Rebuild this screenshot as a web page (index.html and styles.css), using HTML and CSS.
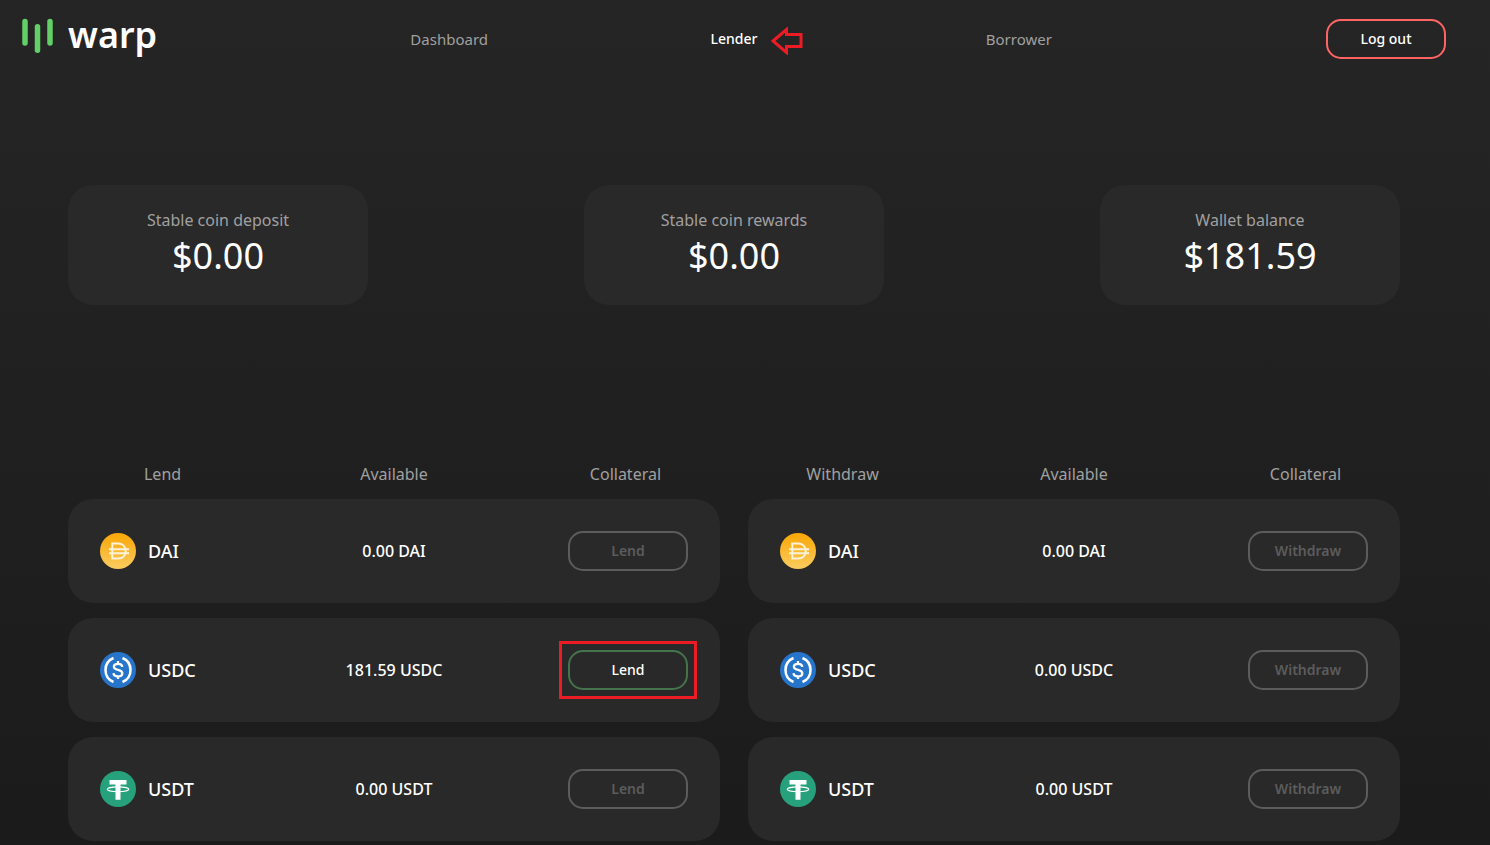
FILE: index.html
```
<!DOCTYPE html>
<html lang="en">
<head>
    <meta charset="UTF-8">
    <meta name="viewport" content="width=device-width, initial-scale=1.0">
    <title>Warp | Lender</title>
    <link rel="stylesheet" href="styles.css">
</head>
<body>
    <!-- Coin icons, reused in both tables -->
    <svg class="sprite" aria-hidden="true">
        <defs>
            <linearGradient id="dai-fill" x1="0" y1="0" x2="0" y2="1">
                <stop offset="0" stop-color="#f9a606"/>
                <stop offset="1" stop-color="#fbcc5f"/>
            </linearGradient>
        </defs>
        <symbol id="dai" viewBox="0 0 36 36">
            <circle cx="18" cy="18" r="18" fill="url(#dai-fill)"/>
            <path d="M12.300 10.600H18c4.800 0 7.700 3 7.700 7.500s-2.900 7.500-7.700 7.500h-5.700zM9 16.200h20M9 20.200h20" fill="none" stroke="#fef3d7" stroke-width="2"/>
        </symbol>
        <symbol id="usdc" viewBox="0 0 36 36">
            <circle cx="18" cy="18" r="18" fill="#2775ca"/>
            <path d="M13.500 6a13 13 0 0 0 0 24M22.500 6a13 13 0 0 1 0 24" fill="none" stroke="#fff" stroke-width="2.500"/>
            <path d="M22.300 14.800c-.2-2-1.900-3-4.300-3-2.500 0-4.100 1.200-4.100 3 0 4.400 8.400 1.900 8.400 6.400 0 2-1.800 3.200-4.300 3.200-2.600 0-4.300-1.200-4.500-3.300M18 9v3M18 24v3" fill="none" stroke="#fff" stroke-width="2.300"/>
        </symbol>
        <symbol id="usdt" viewBox="0 0 36 36">
            <circle cx="18" cy="18" r="18" fill="#26a17b"/>
            <path d="M9.500 9h17v4.500h-6v15.200h-5V13.500h-6z" fill="#fff"/>
            <ellipse cx="18" cy="18.300" rx="10.800" ry="2.400" fill="none" stroke="#fff" stroke-width="1.100"/>
        </symbol>
    </svg>

    <header class="header">
        <a class="logo" href="#">
            <svg class="logo-bars" viewBox="0 0 32 36" aria-hidden="true">
                <g stroke="#62d066" stroke-width="5.500" stroke-linecap="round">
                    <path d="M3 4.500V26M15.500 9.700V33.200M28 4.500V26"/>
                </g>
            </svg>
            <span>warp</span>
        </a>
        <nav class="nav">
            <a href="#">Dashboard</a>
            <a class="active" href="#" aria-current="page">Lender
                <svg class="arrow" viewBox="0 0 32 28" aria-hidden="true">
                    <path d="M2 14 15.500 2.500V7.500H30v12H15.500v6z" fill="none" stroke="#ed1c24" stroke-width="3"/>
                </svg>
            </a>
            <a href="#">Borrower</a>
        </nav>
        <button class="btn btn-logout" type="button">Log out</button>
    </header>

    <main class="content">
        <section class="summary">
            <div class="card">
                <div class="card-title">Stable coin deposit</div>
                <div class="card-value">$0.00</div>
            </div>
            <div class="card">
                <div class="card-title">Stable coin rewards</div>
                <div class="card-value">$0.00</div>
            </div>
            <div class="card">
                <div class="card-title">Wallet balance</div>
                <div class="card-value">$181.59</div>
            </div>
        </section>

        <section class="markets">
            <table class="market">
                <thead>
                    <tr><th>Lend</th><th>Available</th><th>Collateral</th></tr>
                </thead>
                <tbody>
                    <tr>
                        <td><div class="coin"><svg><use href="#dai"/></svg>DAI</div></td>
                        <td>0.00 DAI</td>
                        <td><button class="btn" type="button" disabled>Lend</button></td>
                    </tr>
                    <tr>
                        <td><div class="coin"><svg><use href="#usdc"/></svg>USDC</div></td>
                        <td>181.59 USDC</td>
                        <td><div class="highlight"><button class="btn btn-lend" type="button">Lend</button></div></td>
                    </tr>
                    <tr>
                        <td><div class="coin"><svg><use href="#usdt"/></svg>USDT</div></td>
                        <td>0.00 USDT</td>
                        <td><button class="btn" type="button" disabled>Lend</button></td>
                    </tr>
                </tbody>
            </table>

            <table class="market">
                <thead>
                    <tr><th>Withdraw</th><th>Available</th><th>Collateral</th></tr>
                </thead>
                <tbody>
                    <tr>
                        <td><div class="coin"><svg><use href="#dai"/></svg>DAI</div></td>
                        <td>0.00 DAI</td>
                        <td><button class="btn" type="button" disabled>Withdraw</button></td>
                    </tr>
                    <tr>
                        <td><div class="coin"><svg><use href="#usdc"/></svg>USDC</div></td>
                        <td>0.00 USDC</td>
                        <td><button class="btn" type="button" disabled>Withdraw</button></td>
                    </tr>
                    <tr>
                        <td><div class="coin"><svg><use href="#usdt"/></svg>USDT</div></td>
                        <td>0.00 USDT</td>
                        <td><button class="btn" type="button" disabled>Withdraw</button></td>
                    </tr>
                </tbody>
            </table>
        </section>
    </main>
</body>
</html>
```

FILE: styles.css
```
* {
    margin: 0;
    padding: 0;
    box-sizing: border-box;
    font-family: "Noto Sans", "Open Sans", sans-serif;
}

body {
    min-height: 100vh;
    background: linear-gradient(#252525, #1b1b1b);
    color: #fff;
    font-size: 16px;
}

a {
    color: inherit;
    text-decoration: none;
}

.sprite {
    display: block;
    width: 0;
    height: 0;
}

/* Header */
.header {
    display: grid;
    grid-template-columns: repeat(5, 1fr);
    align-items: center;
    padding: 19px 44px 19px 22px;
}

.logo {
    display: flex;
    align-items: center;
    gap: 14px;
    height: 40px;
    padding-bottom: 8px;
    font-size: 36px;
    font-weight: 600;
    line-height: 32px;
}

.logo-bars {
    width: 32px;
    height: 36px;
}

.nav {
    grid-column: span 3;
    display: grid;
    grid-template-columns: repeat(3, 1fr);
    justify-items: center;
    color: #a0a0a0;
    font-size: 15px;
    line-height: 20px;
}

.nav .active {
    position: relative;
    color: #fff;
    font-size: 14px;
    font-weight: 500;
}

.arrow {
    position: absolute;
    top: -2px;
    left: 100%;
    width: 32px;
    height: 28px;
    margin-left: 14px;
}

/* Buttons */
.btn {
    display: block;
    width: 120px;
    height: 40px;
    margin-left: auto;
    padding-bottom: 2px;
    border: 2px solid #5c5c5c;
    border-radius: 15px;
    background: transparent;
    color: #fff;
    font-size: 14px;
    font-weight: 500;
    cursor: pointer;
}

.btn:disabled {
    color: #5c5c5c;
    font-weight: 600;
    cursor: default;
}

.btn-logout {
    border-color: #ff6464;
}

.btn-lend {
    border-color: #45734c;
}

.highlight {
    width: 120px;
    margin-left: auto;
    outline: 3px solid #ed1c24;
    outline-offset: 6px;
}

/* Summary cards */
.content {
    padding: 107px 90px 0 68px;
}

.summary {
    display: flex;
    justify-content: space-between;
    gap: 24px;
}

.card {
    width: 300px;
    padding: 24px 16px;
    border-radius: 25px;
    background: #292929;
    text-align: center;
}

.card-title {
    color: #a0a0a0;
    font-size: 16px;
    line-height: 22px;
}

.card-value {
    font-size: 36px;
    line-height: 50px;
}

/* Lend and withdraw tables */
.markets {
    display: grid;
    grid-template-columns: 1fr 1fr;
    gap: 28px;
    margin-top: 144px;
}

.market {
    width: 100%;
    margin-bottom: -15px;
    table-layout: fixed;
    border-collapse: separate;
    border-spacing: 0 15px;
    text-align: center;
}

.market th {
    width: 29%;
    color: #a0a0a0;
    font-size: 16px;
    font-weight: 400;
    line-height: 20px;
}

.market th:nth-child(2) {
    width: 42%;
}

.market td {
    height: 104px;
    background: #292929;
    font-weight: 500;
}

.market td:first-child {
    padding-left: 32px;
    border-radius: 25px 0 0 25px;
}

.market td:last-child {
    padding-right: 32px;
    border-radius: 0 25px 25px 0;
}

.coin {
    display: flex;
    align-items: center;
    gap: 12px;
    font-size: 18px;
}

.coin svg {
    width: 36px;
    height: 36px;
}
```
